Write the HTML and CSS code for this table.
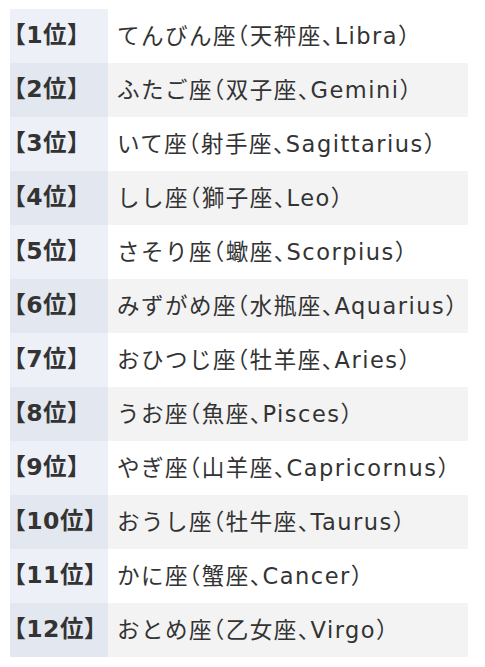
FILE: index.html
```html
<!DOCTYPE html>
<html lang="ja">
<head>
<meta charset="utf-8">
<link rel="stylesheet" href="styles.css">
</head>
<body>
<table class="rank">
<tbody>
<tr><th>【1位】</th><td>てんびん座（天秤座、Libra）</td></tr>
<tr><th>【2位】</th><td>ふたご座（双子座、Gemini）</td></tr>
<tr><th>【3位】</th><td>いて座（射手座、Sagittarius）</td></tr>
<tr><th>【4位】</th><td>しし座（獅子座、Leo）</td></tr>
<tr><th>【5位】</th><td>さそり座（蠍座、Scorpius）</td></tr>
<tr><th>【6位】</th><td>みずがめ座（水瓶座、Aquarius）</td></tr>
<tr><th>【7位】</th><td>おひつじ座（牡羊座、Aries）</td></tr>
<tr><th>【8位】</th><td>うお座（魚座、Pisces）</td></tr>
<tr><th>【9位】</th><td>やぎ座（山羊座、Capricornus）</td></tr>
<tr><th>【10位】</th><td>おうし座（牡牛座、Taurus）</td></tr>
<tr><th>【11位】</th><td>かに座（蟹座、Cancer）</td></tr>
<tr><th>【12位】</th><td>おとめ座（乙女座、Virgo）</td></tr>
</tbody>
</table>
</body>
</html>
```
FILE: styles.css
```css
html, body {
  margin: 0;
  padding: 0;
  background: #ffffff;
}
body {
  font-family: "DejaVu Sans", "Noto Sans CJK JP", sans-serif;
  color: #333333;
}
.rank {
  border-collapse: collapse;
  margin: 9px 0 0 10px;
  width: 458px;
}
.rank th, .rank td {
  height: 54px;
  padding: 0;
  font-size: 22.5px;
  line-height: 1;
  letter-spacing: 1.5px;
  font-feature-settings: "halt";
  vertical-align: middle;
  text-align: left;
  white-space: nowrap;
}
.rank th {
  width: 98px;
  box-sizing: border-box;
  padding-left: 4px;
  font-size: 23.5px;
  font-weight: bold;
  letter-spacing: 0.5px;
  background: #edf0f7;
}
.rank td {
  padding-left: 9px;
  font-weight: normal;
  background: #ffffff;
}
.rank tr:nth-child(even) th {
  background: #e3e7ef;
}
.rank tr:nth-child(even) td {
  background: #f3f3f3;
}
```
